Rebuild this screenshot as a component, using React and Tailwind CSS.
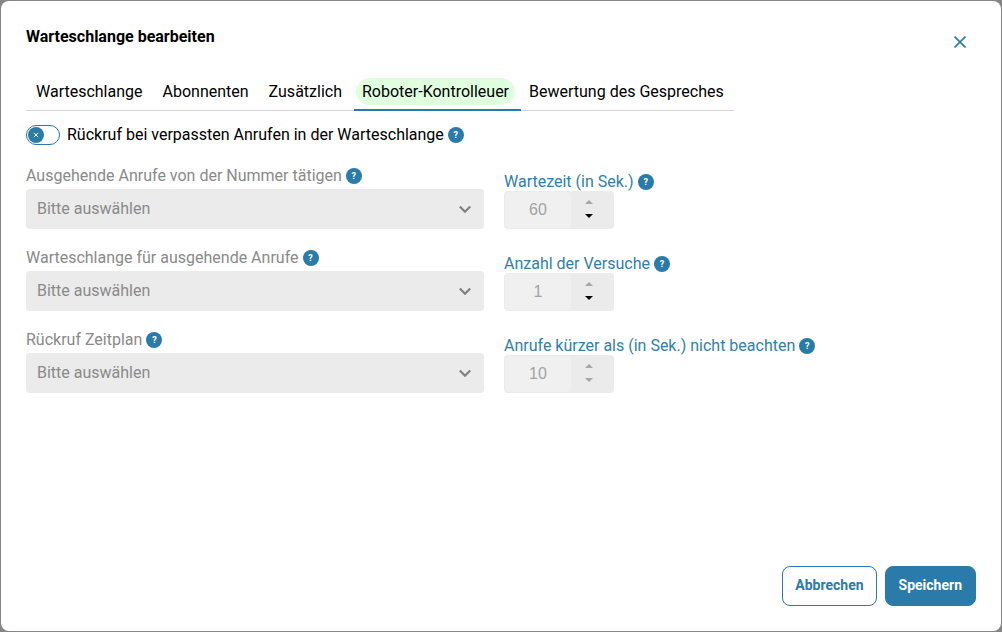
import { useState } from "react";

function Help({ text }) {
  return (
    <button
      type="button"
      aria-label={text}
      className="flex size-4 shrink-0 items-center justify-center rounded-full bg-[#2a7ba9] text-[9px] leading-none font-bold text-white"
    >
      ?
    </button>
  );
}

function SelectField({ id, label }) {
  return (
    <div className="flex flex-col">
      <div className="flex h-[26px] items-center gap-1 text-[#8a8a8a]">
        <label htmlFor={id}>{label}</label>
        <Help text={"Hilfe: " + label} />
      </div>
      <div className="relative">
        <select
          id={id}
          disabled
          className="h-10 w-full appearance-none rounded bg-[#ebebeb] pr-10 pl-[11px] text-[#8a8a8a] opacity-100"
        >
          <option>Bitte auswählen</option>
        </select>
        <svg
          viewBox="0 0 12 8"
          className="pointer-events-none absolute top-4 right-[13px] h-2 w-3"
          fill="none"
          stroke="#808080"
          strokeWidth="2.2"
          aria-hidden="true"
        >
          <path d="M0.8 1.5 6 6.7 11.2 1.5" />
        </svg>
      </div>
    </div>
  );
}

function Arrow({ down, active, onClick, label }) {
  return (
    <button
      type="button"
      aria-label={label}
      onClick={onClick}
      disabled={!active}
      className={"flex h-3.5 w-4 items-center justify-center " + (active ? "text-black" : "text-[#a6a6a6]")}
    >
      <svg viewBox="0 0 8 4" className="h-1 w-2" fill="currentColor" aria-hidden="true">
        <path d={down ? "M0 0H8L4 4Z" : "M0 4H8L4 0Z"} />
      </svg>
    </button>
  );
}

function NumberField({ id, label, initial, canDecrease }) {
  const [value, setValue] = useState(initial);
  return (
    <div className="flex flex-col pt-2.5">
      <div className="flex h-[18px] items-center gap-1 text-[#2f7fac]">
        <label htmlFor={id}>{label}</label>
        <Help text={"Hilfe: " + label} />
      </div>
      <div className="flex h-[38px] w-[110px] items-center rounded bg-[#ebebeb] p-px">
        <input
          id={id}
          type="text"
          inputMode="numeric"
          disabled
          value={value}
          readOnly
          className="h-full w-[66px] rounded bg-[#f0f0f0] text-center font-['Liberation_Sans',sans-serif] text-[#a3a3a3]"
        />
        <div className="ml-2.5 flex flex-col pb-0.5">
          <Arrow label="Erhöhen" />
          <Arrow down active={canDecrease} label="Verringern" onClick={() => setValue(value - 1)} />
        </div>
      </div>
    </div>
  );
}

function Tab({ children }) {
  return (
    <button type="button" role="tab" aria-selected="false" className="px-2.5">
      {children}
    </button>
  );
}

export default function App() {
  const [callback, setCallback] = useState(false);
  return (
    <div className="flex min-h-screen bg-[#868686] p-px font-[Roboto,sans-serif] text-base leading-5 text-black">
      <div
        role="dialog"
        aria-labelledby="title"
        className="flex flex-1 flex-col rounded-lg bg-white p-[25px] pt-[26px]"
      >
        <header className="flex items-start justify-between">
          <h1 id="title" className="font-bold">
            Warteschlange bearbeiten
          </h1>
          <button type="button" aria-label="Schließen" className="flex h-[30px] w-8 items-center justify-center text-[#2a7ba9]">
            <svg viewBox="0 0 12 12" className="size-3" fill="none" stroke="currentColor" strokeWidth="1.6" aria-hidden="true">
              <path d="M0.5 0.5 11.5 11.5M11.5 0.5 0.5 11.5" />
            </svg>
          </button>
        </header>

        <div role="tablist" className="mt-4 flex h-[38px] self-start border-b border-[#d6d6d6]">
          <Tab>Warteschlange</Tab>
          <Tab>Abonnenten</Tab>
          <Tab>Zusätzlich</Tab>
          <button
            type="button"
            role="tab"
            aria-selected="true"
            className="-mb-px ml-0.5 border-b-2 border-[#2a7ba9] pt-px pr-1.5 pl-0.5"
          >
            <span className="flex h-[27px] items-center rounded-full bg-[#dfffdf] px-1.5">Roboter-Kontrolleuer</span>
          </button>
          <button type="button" role="tab" aria-selected="false" className="pr-2.5 pl-2">
            Bewertung des Gespreches
          </button>
        </div>

        <div className="mt-3.5 flex h-5 items-center gap-1">
          <label className="flex items-center gap-[7px]">
            <input
              type="checkbox"
              role="switch"
              checked={callback}
              onChange={(e) => setCallback(e.target.checked)}
              className="peer sr-only"
            />
            <span className="flex h-5 w-[34px] items-center rounded-full border border-[#2a7ba9] p-px peer-checked:justify-end">
              <span className="flex size-4 items-center justify-center rounded-full bg-[#2a7ba9]">
                <svg viewBox="0 0 6 6" className="size-1.5" stroke="#fff" strokeWidth="1" aria-hidden="true">
                  <path d="M0.8 0.8 5.2 5.2M5.2 0.8 0.8 5.2" />
                </svg>
              </span>
            </span>
            Rückruf bei verpassten Anrufen in der Warteschlange
          </label>
          <Help text="Hilfe: Rückruf bei verpassten Anrufen" />
        </div>

        <div className="mt-[18px] grid grid-cols-[458fr_472fr] gap-x-5 gap-y-4">
          <SelectField id="number" label="Ausgehende Anrufe von der Nummer tätigen" />
          <NumberField id="wait" label="Wartezeit (in Sek.)" initial={60} canDecrease />
          <SelectField id="queue" label="Warteschlange für ausgehende Anrufe" />
          <NumberField id="tries" label="Anzahl der Versuche" initial={1} canDecrease />
          <SelectField id="schedule" label="Rückruf Zeitplan" />
          <NumberField id="short" label="Anrufe kürzer als (in Sek.) nicht beachten" initial={10} />
        </div>

        <footer className="mt-auto flex justify-end gap-2 text-sm font-bold">
          <button type="button" className="h-10 rounded-lg border border-[#2a7ba9] px-3 pb-0.5 text-[#2a7ba9]">
            Abbrechen
          </button>
          <button type="button" className="h-10 rounded-lg border border-[#2a7ba9] bg-[#2a7ba9] px-[13px] pb-0.5 text-white">
            Speichern
          </button>
        </footer>
      </div>
    </div>
  );
}
